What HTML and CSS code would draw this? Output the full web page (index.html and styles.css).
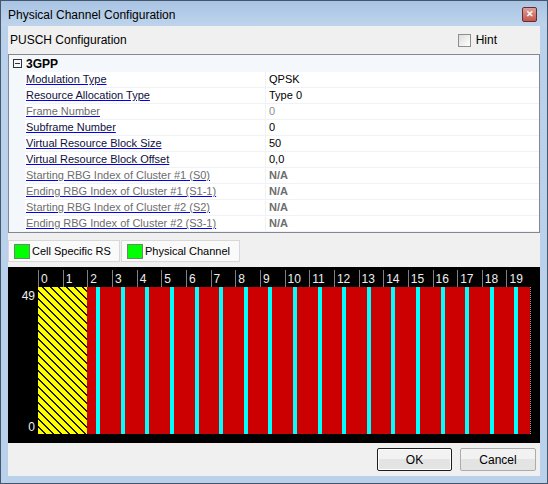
FILE: index.html
```html
<!DOCTYPE html>
<html lang="en">

<head>
  <meta charset="utf-8">
  <title>Physical Channel Configuration</title>
  <link rel="stylesheet" href="styles.css">
</head>

<body>
  <div class="window">
    <div class="titlebar">
      <span class="caption">Physical Channel Configuration</span>
      <span class="close">&#x2715;</span>
    </div>

    <div class="client">
      <div class="head">
        <span>PUSCH Configuration</span>
        <label class="hint"><span class="check"></span>Hint</label>
      </div>

      <div class="grid">
        <div class="cat">
          <span class="gutter"><span class="minus"></span></span>
          <b>3GPP</b>
        </div>
        <div class="row"><span class="gutter"></span><span class="name">Modulation Type</span><span class="val">QPSK</span></div>
        <div class="row"><span class="gutter"></span><span class="name">Resource Allocation Type</span><span class="val">Type 0</span></div>
        <div class="row dis"><span class="gutter"></span><span class="name">Frame Number</span><span class="val">0</span></div>
        <div class="row"><span class="gutter"></span><span class="name">Subframe Number</span><span class="val">0</span></div>
        <div class="row"><span class="gutter"></span><span class="name">Virtual Resource Block Size</span><span class="val">50</span></div>
        <div class="row"><span class="gutter"></span><span class="name">Virtual Resource Block Offset</span><span class="val">0,0</span></div>
        <div class="row na"><span class="gutter"></span><span class="name">Starting RBG Index of Cluster #1 (S0)</span><span class="val">N/A</span></div>
        <div class="row na"><span class="gutter"></span><span class="name">Ending RBG Index of Cluster #1 (S1-1)</span><span class="val">N/A</span></div>
        <div class="row na"><span class="gutter"></span><span class="name">Starting RBG Index of Cluster #2 (S2)</span><span class="val">N/A</span></div>
        <div class="row na"><span class="gutter"></span><span class="name">Ending RBG Index of Cluster #2 (S3-1)</span><span class="val">N/A</span></div>
      </div>

      <div class="legend">
        <div class="key"><span class="sw"></span>Cell Specific RS</div>
        <div class="key wide"><span class="sw"></span>Physical Channel</div>
      </div>

      <div class="chart">
        <div class="ticks" id="ticks"></div>
        <div class="body">
          <div class="axis"><span>49</span><span>0</span></div>
          <div class="plot" id="plot">
            <div class="hatch"></div>
          </div>
        </div>
      </div>

      <div class="foot">
        <button class="btn def">OK</button>
        <button class="btn">Cancel</button>
      </div>
    </div>
  </div>

  <script>
    var ticks = document.getElementById('ticks');
    var plot = document.getElementById('plot');
    for (var i = 0; i < 20; i++) {
      var t = document.createElement('span');
      t.className = 'tick';
      t.textContent = i;
      ticks.appendChild(t);
      if (i > 1) {
        var c = document.createElement('div');
        c.className = 'col';
        plot.appendChild(c);
      }
    }
  </script>
</body>

</html>
```

FILE: styles.css
```css
body {
  margin: 0;
  font-family: "Liberation Sans", Arial, sans-serif;
  font-size: 11px;
  color: #000;
}

.window {
  width: 548px;
  height: 484px;
  box-sizing: border-box;
  border: 1px solid #44576c;
  padding: 0 7px 7px 7px;
  background: linear-gradient(#a9c4e3, #bed4ec 25px, #b9d1ea 25px);
  display: flex;
  flex-direction: column;
}

.titlebar {
  height: 25px;
  display: flex;
  align-items: center;
  justify-content: space-between;
}

.caption {
  font-size: 12px;
  padding-top: 2px;
}

.close {
  width: 13px;
  height: 13px;
  margin: 2px 3px 0 0;
  border: 1px solid #6b2b2b;
  border-radius: 2px;
  background: linear-gradient(#dba09a, #c4574c);
  color: #fff;
  font-size: 9px;
  font-weight: 700;
  line-height: 13px;
  text-align: center;
}

.client {
  flex: 1;
  background: #f0f0f0;
  display: flex;
  flex-direction: column;
}

.head {
  height: 28px;
  display: flex;
  align-items: center;
  justify-content: space-between;
  padding: 0 43px 0 2px;
  font-size: 12px;
}

.hint {
  display: flex;
  align-items: center;
  gap: 5px;
}

.check {
  width: 11px;
  height: 11px;
  border: 1px solid #8f8f8f;
  background: linear-gradient(135deg, #dcdcdc, #fff);
}

.grid {
  height: 179px;
  box-sizing: border-box;
  border: 1px solid #828790;
  background: #fff;
}

.cat,
.row {
  display: flex;
}

.cat {
  height: 17px;
  align-items: center;
  background: #f4f7fc;
  font-size: 12px;
}

.gutter {
  width: 16px;
  align-self: stretch;
  background: #f4f7fc;
  display: flex;
  align-items: center;
  justify-content: center;
}

.minus {
  width: 7px;
  height: 7px;
  border: 1px solid #333;
  margin-left: 1px;
  background: linear-gradient(#333, #333) center / 5px 1px no-repeat;
}

.cat b {
  padding-left: 1px;
}

.row {
  height: 16px;
  line-height: 15px;
}

.name {
  width: 239px;
  padding-left: 1px;
  border-bottom: 1px solid #f0f2f6;
  border-right: 1px solid #f0f2f6;
  color: #101040;
  text-decoration: underline #0000ff;
  text-underline-offset: 1px;
}

.val {
  flex: 1;
  padding-left: 3px;
  border-bottom: 1px solid #f0f2f6;
}

.dis .name,
.na .name {
  color: #6d6d6d;
}

.dis .val {
  color: #8d8d8d;
}

.na .val {
  font-weight: 700;
  color: #6d6d6d;
}

.legend {
  margin-top: 7px;
  height: 22px;
  display: flex;
}

.key {
  width: 112px;
  box-sizing: border-box;
  border: 1px solid #d8d8d8;
  background: #fafafa;
  display: flex;
  align-items: center;
  gap: 2px;
  padding-left: 5px;
  font-size: 11px;
}

.key.wide {
  width: 119px;
  margin-left: 1px;
}

.sw {
  width: 14px;
  height: 13px;
  border: 1px solid #6a8a6a;
  background: #00ff00;
}

.chart {
  margin-top: 5px;
  height: 176px;
  background: #000;
  display: flex;
  flex-direction: column;
}

.ticks {
  height: 17px;
  margin: 3px 9px 0 30px;
  display: flex;
}

.tick {
  flex: 1 1 0;
  border-left: 1px solid #808080;
  padding-left: 2px;
  color: #eeeeee;
  font-size: 12px;
  line-height: 18px;
}

.body {
  height: 147px;
  display: flex;
}

.axis {
  width: 27px;
  padding-right: 3px;
  display: flex;
  flex-direction: column;
  justify-content: space-between;
  align-items: flex-end;
  color: #eeeeee;
  font-size: 12px;
  line-height: 14px;
  padding-top: 2px;
}

.plot {
  width: 493px;
  display: flex;
  border-right: 1px dotted #999;
  box-sizing: border-box;
}

.hatch {
  flex: 2 1 0;
  background: repeating-linear-gradient(45deg, #ffff00 0 4.6px, #1a1a00 4.6px 5.66px);
}

.col {
  flex: 1 1 0;
  background: linear-gradient(to right, #cc0000 9px, #00ffff 9px 13px, #cc0000 13px);
}

.foot {
  flex: 1;
  display: flex;
  justify-content: flex-end;
  gap: 8px;
  padding: 5px 4px 0 0;
}

.btn {
  width: 76px;
  height: 23px;
  border: 1px solid #acacac;
  border-radius: 2px;
  background: linear-gradient(#f2f2f2 50%, #e4e4e4 50%);
  font-family: "Liberation Sans", Arial, sans-serif;
  font-size: 12px;
}

.btn.def {
  width: 75px;
  border: 1px solid #1e1e1e;
  box-shadow: inset 0 0 0 1px #fff;
}
```
